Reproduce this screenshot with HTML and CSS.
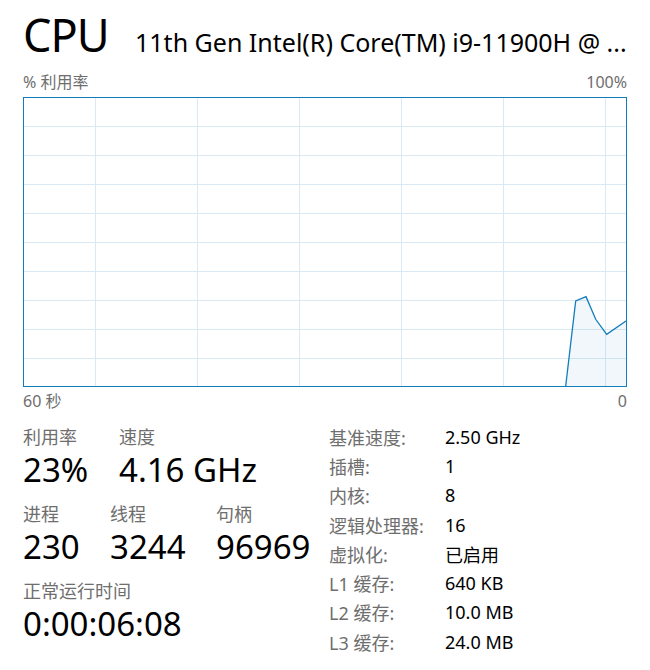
FILE: index.html
```html
<!DOCTYPE html>
<html lang="zh-CN">
  <head>
    <meta charset="UTF-8" />
    <meta name="viewport" content="width=device-width, initial-scale=1.0" />
    <title>CPU 性能</title>
    <link rel="stylesheet" href="styles.css">
  </head>
  <body>
    <div class="page">
      <header class="title">
        <h1>CPU</h1>
        <span class="model">11th Gen Intel(R) Core(TM) i9-11900H @ ...</span>
      </header>

      <div class="chart-labels">
        <span>% 利用率</span>
        <span>100%</span>
      </div>
      <svg class="chart" width="604" height="290" viewBox="0 0 604 290">
        <!-- 网格 -->
        <g stroke="#d9eaf4" stroke-width="1">
          <line x1="72.5" y1="0" x2="72.5" y2="290" />
          <line x1="174.5" y1="0" x2="174.5" y2="290" />
          <line x1="276.5" y1="0" x2="276.5" y2="290" />
          <line x1="378.5" y1="0" x2="378.5" y2="290" />
          <line x1="480.5" y1="0" x2="480.5" y2="290" />
          <line x1="582.5" y1="0" x2="582.5" y2="290" />
          <line x1="0" y1="29.5" x2="604" y2="29.5" />
          <line x1="0" y1="58.5" x2="604" y2="58.5" />
          <line x1="0" y1="87.5" x2="604" y2="87.5" />
          <line x1="0" y1="116.5" x2="604" y2="116.5" />
          <line x1="0" y1="145.5" x2="604" y2="145.5" />
          <line x1="0" y1="174.5" x2="604" y2="174.5" />
          <line x1="0" y1="203.5" x2="604" y2="203.5" />
          <line x1="0" y1="232.5" x2="604" y2="232.5" />
          <line x1="0" y1="261.5" x2="604" y2="261.5" />
        </g>
        <!-- 利用率曲线 -->
        <polygon points="542.7,289 552.7,204 563,199.7 572.7,222.3 583.7,237.3 603,224 603,289" fill="#117dbb" fill-opacity="0.06" />
        <polyline points="542.7,289 552.7,204 563,199.7 572.7,222.3 583.7,237.3 603,224" fill="none" stroke="#117dbb" stroke-width="1.3" />
        <rect x="0.5" y="0.5" width="603" height="289" fill="none" stroke="#117dbb" stroke-width="1" />
      </svg>
      <div class="chart-labels axis">
        <span>60 秒</span>
        <span>0</span>
      </div>

      <section class="stats">
        <div class="stats-left">
          <div class="stat-row row-1">
            <div class="stat">
              <div class="label">利用率</div>
              <div class="value">23%</div>
            </div>
            <div class="stat">
              <div class="label">速度</div>
              <div class="value">4.16 GHz</div>
            </div>
          </div>
          <div class="stat-row row-2">
            <div class="stat">
              <div class="label">进程</div>
              <div class="value">230</div>
            </div>
            <div class="stat">
              <div class="label">线程</div>
              <div class="value">3244</div>
            </div>
            <div class="stat">
              <div class="label">句柄</div>
              <div class="value">96969</div>
            </div>
          </div>
          <div class="stat-row">
            <div class="stat">
              <div class="label">正常运行时间</div>
              <div class="value">0:00:06:08</div>
            </div>
          </div>
        </div>

        <dl class="specs">
          <dt>基准速度:</dt><dd>2.50 GHz</dd>
          <dt>插槽:</dt><dd>1</dd>
          <dt>内核:</dt><dd>8</dd>
          <dt>逻辑处理器:</dt><dd>16</dd>
          <dt>虚拟化:</dt><dd>已启用</dd>
          <dt>L1 缓存:</dt><dd>640 KB</dd>
          <dt>L2 缓存:</dt><dd>10.0 MB</dd>
          <dt>L3 缓存:</dt><dd>24.0 MB</dd>
        </dl>
      </section>
    </div>
  </body>
</html>
```

FILE: styles.css
```css
:root {
  --label-color: #6e6e6e;
  --text-color: #000;
  --chart-color: #117dbb;
  --font-family: "Noto Sans", "Noto Sans CJK SC", sans-serif;
}
* {
  margin: 0;
  padding: 0;
  box-sizing: border-box;
}
body {
  background-color: #fff;
  font-family: var(--font-family);
  color: var(--text-color);
}
.page {
  width: 650px;
  padding: 12px 23px 0;
}
.title {
  display: flex;
  align-items: baseline;
  height: 60px;
}
.title h1 {
  font-size: 45px;
  font-weight: 400;
  letter-spacing: -1px;
  line-height: 1;
  width: 112px;
}
.model {
  font-size: 25px;
  white-space: nowrap;
}
.chart-labels {
  display: flex;
  justify-content: space-between;
  font-size: 16px;
  line-height: 20px;
  color: var(--label-color);
}
.chart {
  display: block;
  margin-top: 5px;
}
.axis {
  margin-top: 4px;
}
.stats {
  display: grid;
  grid-template-columns: 306px 1fr;
  margin-top: 11px;
}
.stats-left {
  padding-top: 6px;
}
.stat-row {
  display: flex;
  margin-bottom: 13px;
}
.row-1 .stat:first-child {
  width: 96px;
}
.row-2 .stat:nth-child(1) {
  width: 87px;
}
.row-2 .stat:nth-child(2) {
  width: 106px;
}
.label {
  font-family: "Liberation Sans", "Noto Sans CJK SC", sans-serif;
  font-size: 18px;
  line-height: 20px;
  color: var(--label-color);
}
.value {
  font-size: 33px;
  line-height: 44px;
}
.specs {
  display: grid;
  grid-template-columns: 116px 1fr;
  grid-auto-rows: 29.3px;
  align-items: center;
  font-size: 18px;
}
.specs dt {
  color: var(--label-color);
}
```
